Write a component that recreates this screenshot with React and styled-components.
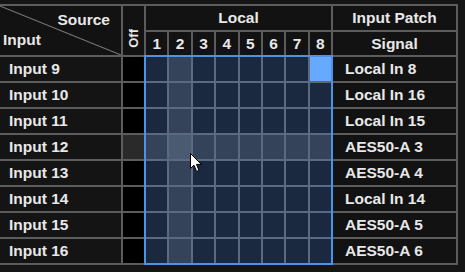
import React from 'react'
import styled, { createGlobalStyle } from 'styled-components'

const GlobalStyle = createGlobalStyle`
   html, body {
      margin: 0;
      padding: 0;
      background: #151515;
   }
   body {
      font-family: "Liberation Sans", Arial, sans-serif;
      overflow: hidden;
   }
`

const inputs = [
   { name: 'Input 9', signal: 'Local In 8' },
   { name: 'Input 10', signal: 'Local In 16' },
   { name: 'Input 11', signal: 'Local In 15' },
   { name: 'Input 12', signal: 'AES50-A 3' },
   { name: 'Input 13', signal: 'AES50-A 4' },
   { name: 'Input 14', signal: 'Local In 14' },
   { name: 'Input 15', signal: 'AES50-A 5' },
   { name: 'Input 16', signal: 'AES50-A 6' },
]

const hoverRow = 3
const hoverCol = 1
const selected = { row: 0, col: 7 }

const cellColor = (r, c) => {
   if (r === selected.row && c === selected.col) return '#66aaff'
   if (r === hoverRow && c === hoverCol) return '#4a5a71'
   if (r === hoverRow || c === hoverCol) return '#35435a'
   return '#1a2840'
}

const RoutingMatrix = () => {
   return (
      <Page>
         <GlobalStyle />
         <Table>
            <Corner>
               <span className='source'>Source</span>
               <span className='input'>Input</span>
            </Corner>
            <OffHead><span>Off</span></OffHead>
            <GroupHead>Local</GroupHead>
            <HeadCell>Input Patch</HeadCell>
            {[1, 2, 3, 4, 5, 6, 7, 8].map(n => (
               <HeadCell key={n}>{n}</HeadCell>
            ))}
            <HeadCell>Signal</HeadCell>

            {inputs.map((row, r) => (
               <React.Fragment key={row.name}>
                  <NameCell style={{ gridRow: r + 3 }}>{row.name}</NameCell>
                  <OffCell $active={r === hoverRow} style={{ gridRow: r + 3 }} />
                  <SignalCell style={{ gridRow: r + 3 }}>{row.signal}</SignalCell>
               </React.Fragment>
            ))}

            <Matrix>
               {inputs.map((row, r) =>
                  [0, 1, 2, 3, 4, 5, 6, 7].map(c => (
                     <MatrixCell key={`${r}-${c}`} style={{ background: cellColor(r, c) }} />
                  ))
               )}
            </Matrix>
         </Table>
         <Cursor width="13" height="20" viewBox="0 0 13 20">
            <path d="M0.5 0.5 L0.5 15.5 L4 12.2 L6.6 18.4 L9 17.4 L6.5 11.4 L11.3 11.4 Z" fill="#fff" stroke="#000" strokeWidth="1" />
         </Cursor>
      </Page>
   )
}

const Page = styled.div`
   position: relative;
   width: 465px;
   height: 272px;
   padding-top: 4px;
   box-sizing: border-box;
`

const Table = styled.div`
   display: grid;
   width: 456px;
   grid-template-columns: 121px 21px repeat(8, 1fr) 123px;
   grid-template-rows: 24px 23px repeat(8, 24px);
   gap: 2px;
   background: #5c5c5c;
   border-top: 2px solid #5c5c5c;
   border-right: 2px solid #5c5c5c;
   border-bottom: 2px solid #5c5c5c;
   color: #e8e8e8;
   font-weight: 700;
   font-size: 15.5px;
`

const Corner = styled.div`
   grid-row: 1 / span 2;
   grid-column: 1;
   position: relative;
   background:
      linear-gradient(to top right, transparent calc(50% - 1px), #7a7a7a 50%, transparent calc(50% + 1px)),
      #121212;

   .source {
      position: absolute;
      right: 11px;
      top: 5px;
   }
   .input {
      position: absolute;
      left: 3px;
      bottom: 6px;
   }
`

const OffHead = styled.div`
   grid-row: 1 / span 2;
   grid-column: 2;
   background: #121212;
   display: flex;
   align-items: flex-end;
   justify-content: center;
   padding-bottom: 7px;

   span {
      writing-mode: vertical-rl;
      transform: rotate(180deg);
      font-size: 13px;
      line-height: 13px;
   }
`

const GroupHead = styled.div`
   grid-row: 1;
   grid-column: 3 / span 8;
   background: #121212;
   display: flex;
   align-items: center;
   justify-content: center;
`

const HeadCell = styled.div`
   background: #121212;
   display: flex;
   align-items: center;
   justify-content: center;
`

const NameCell = styled.div`
   grid-column: 1;
   background: #141414;
   display: flex;
   align-items: center;
   padding-left: 9px;
`

const OffCell = styled.div`
   grid-column: 2;
   background: ${p => (p.$active ? '#2a2a2a' : '#000')};
`

const SignalCell = styled.div`
   grid-column: 11;
   background: #121212;
   display: flex;
   align-items: center;
   padding-left: 12px;
`

const Matrix = styled.div`
   grid-row: 3 / span 8;
   grid-column: 3 / span 8;
   display: grid;
   grid-template-columns: repeat(8, 1fr);
   grid-template-rows: repeat(8, 1fr);
   gap: 2px;
   background: #5a6a82;
   outline: 2px solid #4d92e6;
`

const MatrixCell = styled.div``

const Cursor = styled.svg`
   position: absolute;
   left: 190px;
   top: 153px;
`

export default RoutingMatrix
